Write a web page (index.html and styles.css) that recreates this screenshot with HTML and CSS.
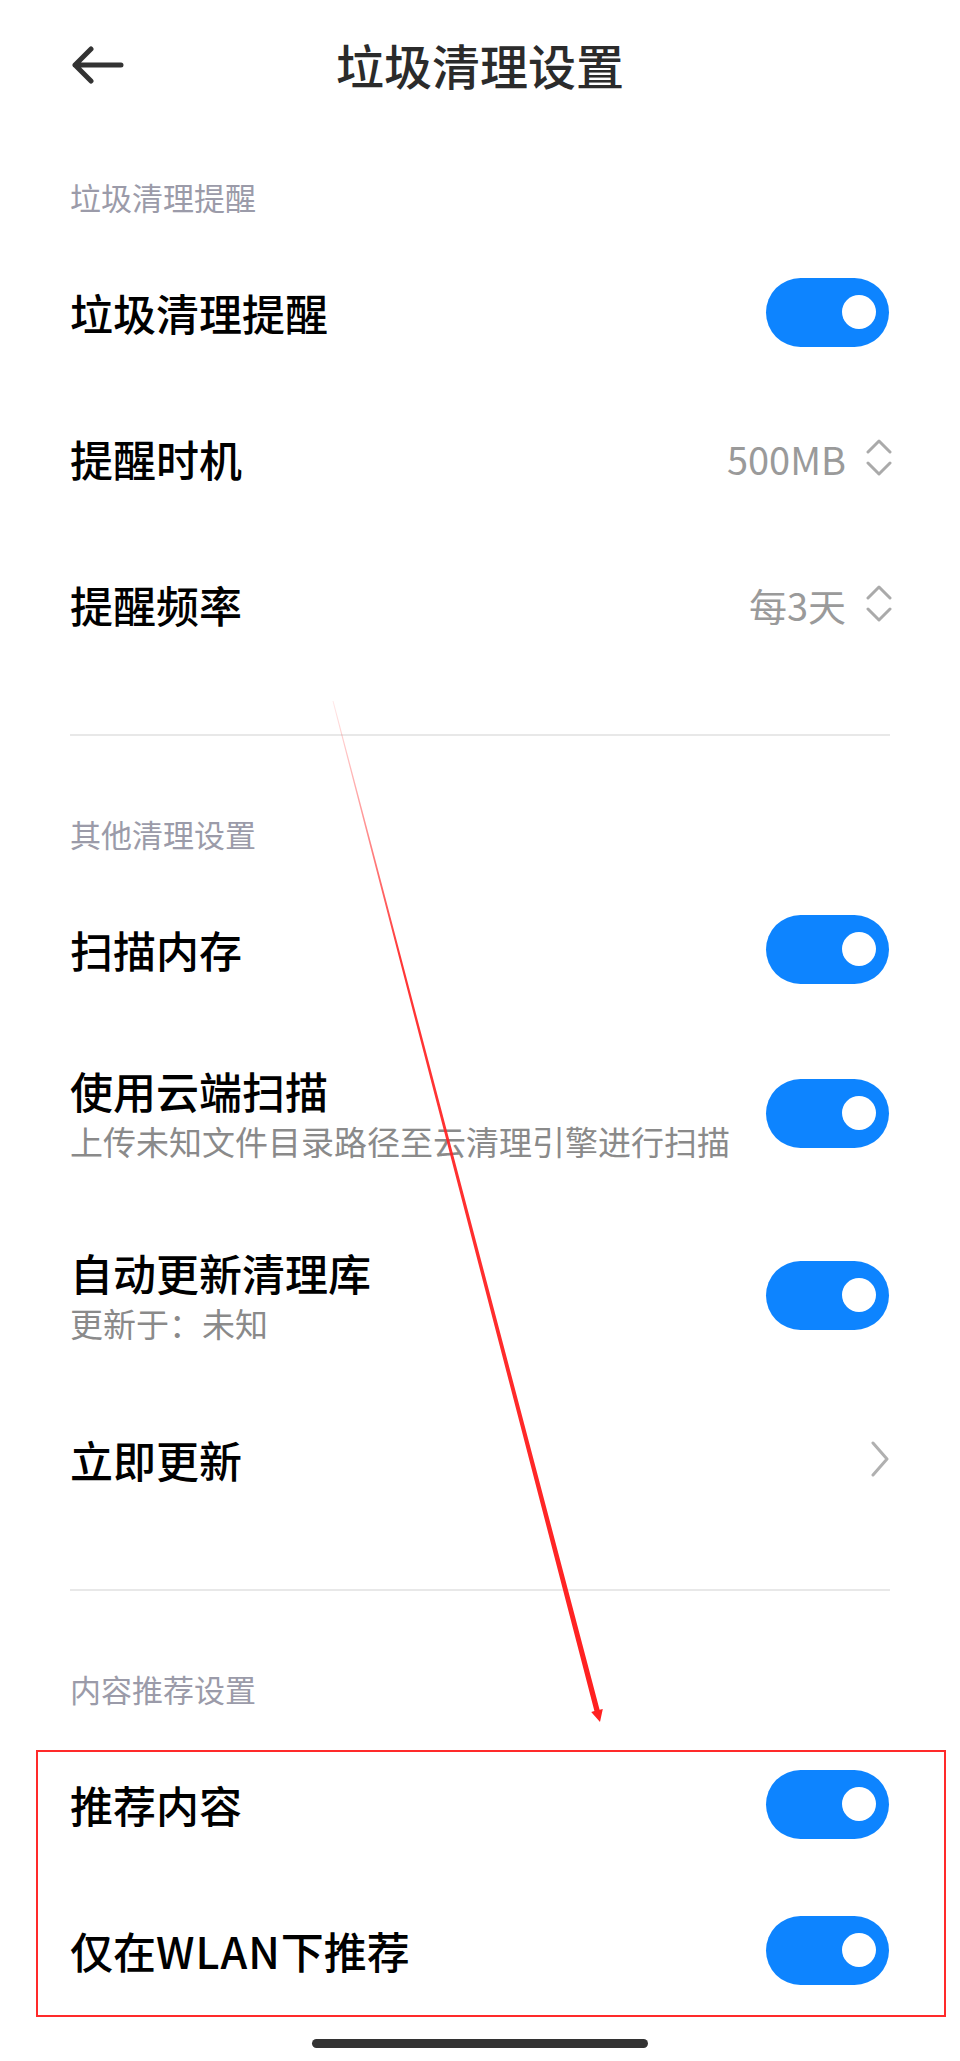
FILE: index.html
```html
<!DOCTYPE html>
<html lang="zh-CN">
<head>
  <meta charset="UTF-8">
  <title>垃圾清理设置</title>
  <link rel="stylesheet" href="styles.css">
</head>
<body>
  <div class="page">
    <header class="nav">
      <span class="back">
        <svg width="52" height="38" viewBox="0 0 52 38">
          <path d="M3 19 H49 M19 3 L3 19 L19 35" fill="none" stroke="#333" stroke-width="5" stroke-linecap="round" stroke-linejoin="round"/>
        </svg>
      </span>
      <h1 class="nav-title">垃圾清理设置</h1>
      <span></span>
    </header>

    <!-- 垃圾清理提醒 -->
    <section class="group">
      <div class="group-title">垃圾清理提醒</div>
      <div class="row">
        <div class="row-text"><div class="row-name">垃圾清理提醒</div></div>
        <span class="switch on"></span>
      </div>
      <div class="row">
        <div class="row-text"><div class="row-name">提醒时机</div></div>
        <div class="row-value">
          <span>500MB</span>
          <svg class="updown" width="26" height="40" viewBox="0 0 26 40">
            <path d="M2 14 L13 3 L24 14 M2 25 L13 36 L24 25" fill="none" stroke="#aaa" stroke-width="3" stroke-linecap="round" stroke-linejoin="round"/>
          </svg>
        </div>
      </div>
      <div class="row">
        <div class="row-text"><div class="row-name">提醒频率</div></div>
        <div class="row-value">
          <span>每3天</span>
          <svg class="updown" width="26" height="40" viewBox="0 0 26 40">
            <path d="M2 14 L13 3 L24 14 M2 25 L13 36 L24 25" fill="none" stroke="#aaa" stroke-width="3" stroke-linecap="round" stroke-linejoin="round"/>
          </svg>
        </div>
      </div>
    </section>

    <!-- 其他清理设置 -->
    <section class="group">
      <div class="group-title">其他清理设置</div>
      <div class="row">
        <div class="row-text"><div class="row-name">扫描内存</div></div>
        <span class="switch on"></span>
      </div>
      <div class="row two-line">
        <div class="row-text">
          <div class="row-name">使用云端扫描</div>
          <div class="row-desc">上传未知文件目录路径至云清理引擎进行扫描</div>
        </div>
        <span class="switch on"></span>
      </div>
      <div class="row two-line">
        <div class="row-text">
          <div class="row-name">自动更新清理库</div>
          <div class="row-desc">更新于：未知</div>
        </div>
        <span class="switch on"></span>
      </div>
      <div class="row">
        <div class="row-text"><div class="row-name">立即更新</div></div>
        <svg class="chevron" width="20" height="36" viewBox="0 0 20 36">
          <path d="M3 2 L17 18 L3 34" fill="none" stroke="#b0b0b0" stroke-width="3" stroke-linecap="round" stroke-linejoin="round"/>
        </svg>
      </div>
    </section>

    <!-- 内容推荐设置 -->
    <section class="group">
      <div class="group-title">内容推荐设置</div>
      <div class="row">
        <div class="row-text"><div class="row-name">推荐内容</div></div>
        <span class="switch on"></span>
      </div>
      <div class="row">
        <div class="row-text"><div class="row-name">仅在<span class="latin">WLAN</span>下推荐</div></div>
        <span class="switch on"></span>
      </div>
    </section>

    <div class="home-bar"></div>

    <!-- 标注 -->
    <div class="mark-box"></div>
    <svg class="mark-arrow" width="960" height="2061" viewBox="0 0 960 2061">
      <defs>
        <linearGradient id="fade" x1="333" y1="701" x2="600" y2="1722" gradientUnits="userSpaceOnUse">
          <stop offset="0" stop-color="#ff2020" stop-opacity="0.1"/>
          <stop offset="0.25" stop-color="#ff2020" stop-opacity="0.9"/>
          <stop offset="1" stop-color="#ff2020"/>
        </linearGradient>
      </defs>
      <polygon fill="url(#fade)" points="333.5,700.9 599.6,1709.8 602.8,1708.9 600,1722 591.2,1711.9 594.4,1711 332.5,701.1"/>
    </svg>
  </div>
</body>
</html>
```

FILE: styles.css
```css
body {
  margin: 0;
  background: #fff;
  font-family: "Noto Sans CJK SC", "Noto Sans", sans-serif;
}

.page {
  position: relative;
  width: 960px;
  min-height: 2061px;
}

.nav {
  height: 128px;
  padding: 0 70px;
  display: grid;
  grid-template-columns: 1fr auto 1fr;
  align-items: center;
}

.back {
  display: flex;
  align-items: center;
  margin-left: 2px;
  margin-top: 2px;
}

.nav-title {
  margin: 0;
  font-size: 48px;
  font-weight: 500;
  line-height: 64px;
  color: #2b2b2b;
}

.group {
  margin: 0 70px;
  padding-bottom: 57px;
}

.group + .group {
  border-top: 2px solid #e8e8e8;
}

.group:last-of-type {
  padding-bottom: 0;
}

.group-title {
  padding: 47px 0 20px;
  font-size: 31px;
  line-height: 44px;
  color: #9b9ba9;
}

.group + .group .group-title {
  padding-top: 76px;
}

.row {
  min-height: 146px;
  display: flex;
  align-items: center;
  justify-content: space-between;
}

.row.two-line {
  min-height: 182px;
}

.row-name {
  font-size: 43px;
  line-height: 56px;
  font-weight: 500;
  color: #000;
}

.row-name .latin {
  letter-spacing: 1px;
}

.row-desc {
  font-size: 33px;
  line-height: 46px;
  color: #8a8a8a;
  white-space: nowrap;
}

.row-value {
  display: flex;
  align-items: center;
  font-size: 38px;
  color: #9a9a9a;
}

.updown {
  margin-left: 20px;
  margin-right: -2px;
}

.switch {
  width: 123px;
  height: 69px;
  border-radius: 35px;
  background: #0d84ff;
  display: flex;
  align-items: center;
  justify-content: flex-end;
  padding-right: 13px;
  box-sizing: border-box;
  margin-right: 1px;
}

.switch::after {
  content: "";
  width: 34px;
  height: 34px;
  border-radius: 50%;
  background: #fff;
}

.home-bar {
  width: 336px;
  height: 9px;
  border-radius: 5px;
  background: #333;
  margin: 16px auto 0;
}

.mark-box {
  position: absolute;
  left: 36px;
  top: 1750px;
  width: 910px;
  height: 267px;
  border: 2px solid #ff2a2a;
  box-sizing: border-box;
}

.mark-arrow {
  position: absolute;
  left: 0;
  top: 0;
  pointer-events: none;
}
```
